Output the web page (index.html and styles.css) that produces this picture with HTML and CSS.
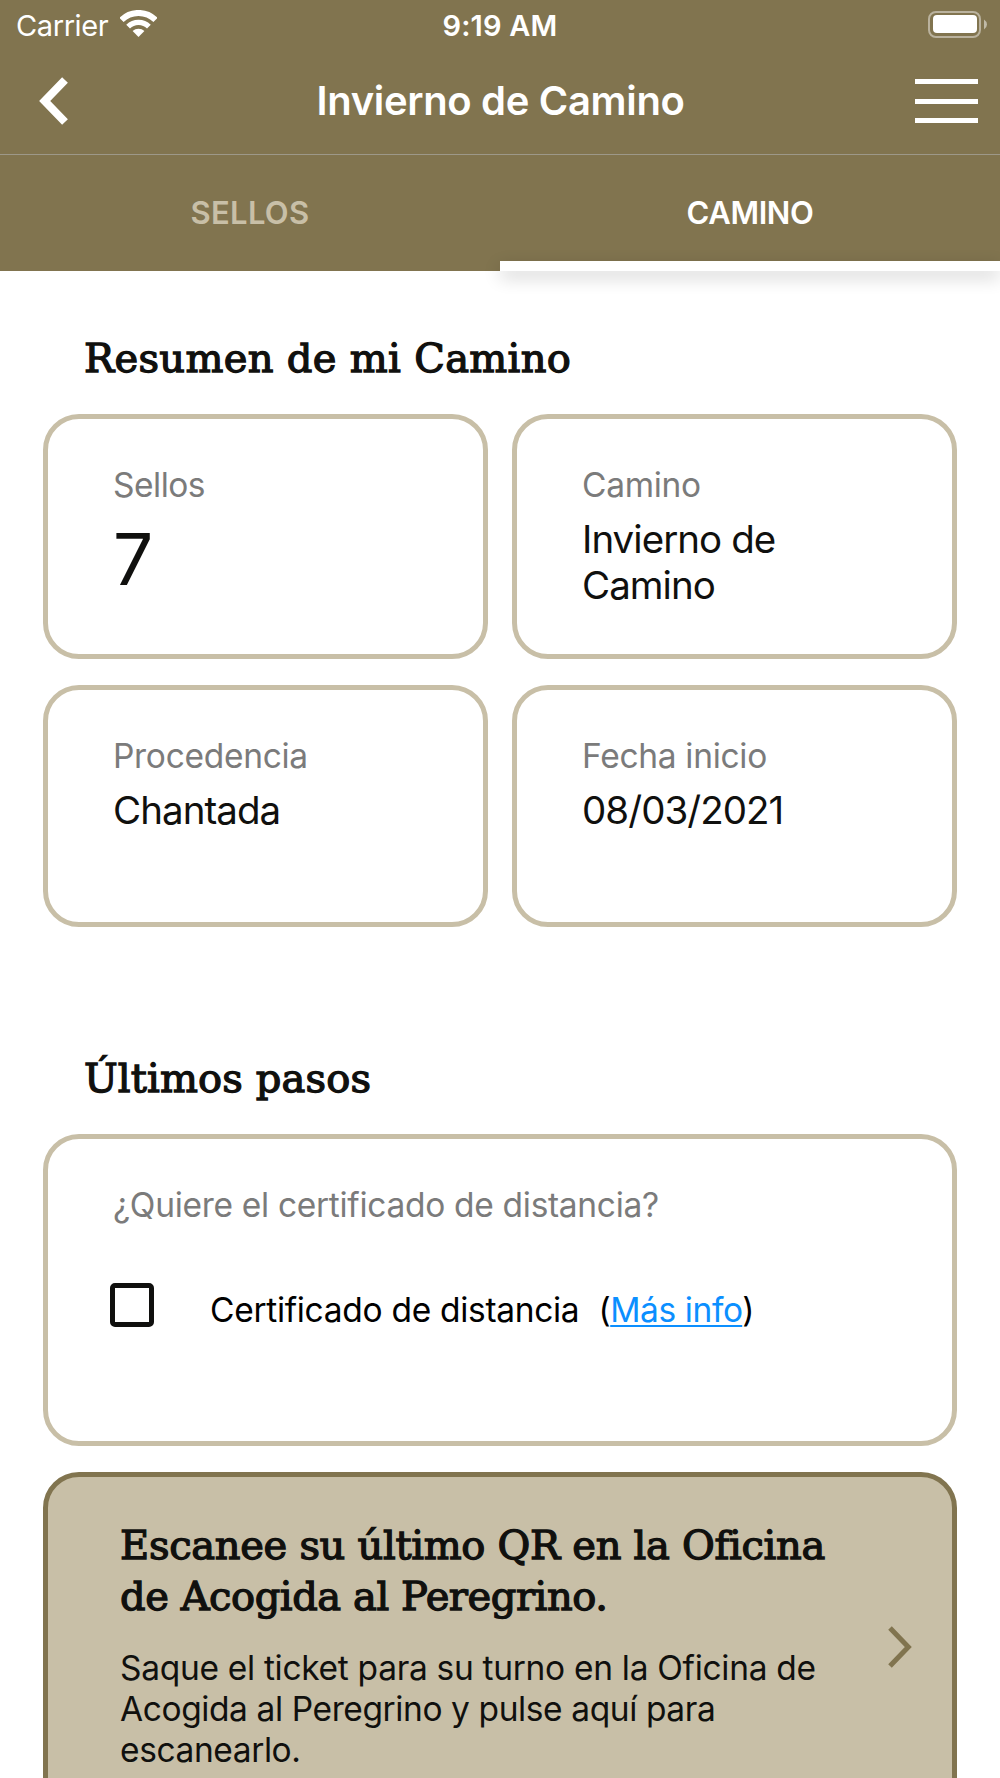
FILE: index.html
```
<!DOCTYPE html>
<html lang="es">
<head>
	<meta charset="UTF-8">
	<title>Invierno de Camino</title>
	<link rel="stylesheet" href="styles.css">
</head>
<body>

<header class="header">
	<div class="status">
		<div class="status-left">
			<span class="carrier">Carrier</span>
			<svg class="wifi" width="37" height="28" viewBox="0 0 37 28">
				<path d="M1.5 10A24 24 0 0 1 35.5 10" fill="none" stroke="#fff" stroke-width="6"/>
				<path d="M8.1 16.6A14.7 14.7 0 0 1 28.9 16.6" fill="none" stroke="#fff" stroke-width="5.3"/>
				<path d="M12.6 21.1A8.3 8.3 0 0 1 24.4 21.1L18.5 27Z" fill="#fff"/>
			</svg>
		</div>
		<span class="time">9:19 AM</span>
		<svg class="battery" width="60" height="27" viewBox="0 0 60 27">
			<rect x="1" y="1" width="51" height="25" rx="7" fill="none" stroke="#fff" stroke-opacity=".45" stroke-width="2"/>
			<rect x="5" y="4" width="44" height="18" rx="4" fill="#fff"/>
			<path d="M56 8.5Q59 10.500 59 13.500T56 18.500Z" fill="#fff" fill-opacity=".5"/>
		</svg>
	</div>

	<div class="navbar">
		<svg class="back" width="30" height="48" viewBox="0 0 30 48">
			<path d="M26 3L5.700 24L26 45" fill="none" stroke="#fff" stroke-width="8"/>
		</svg>
		<h1 class="title">Invierno de Camino</h1>
		<div class="menu"><i></i><i></i><i></i></div>
	</div>

	<nav class="tabs">
		<a class="tab">SELLOS</a>
		<a class="tab active">CAMINO</a>
	</nav>
</header>

<main class="content">
	<h2 class="heading">Resumen de mi Camino</h2>
	<div class="grid">
		<div class="card">
			<div class="label short">Sellos</div>
			<div class="value big">7</div>
		</div>
		<div class="card">
			<div class="label">Camino</div>
			<div class="value">Invierno de<br>Camino</div>
		</div>
		<div class="card">
			<div class="label">Procedencia</div>
			<div class="value">Chantada</div>
		</div>
		<div class="card">
			<div class="label">Fecha inicio</div>
			<div class="value">08/03/2021</div>
		</div>
	</div>

	<h2 class="heading last">Últimos pasos</h2>
	<div class="card certificate">
		<div class="label">¿Quiere el certificado de distancia?</div>
		<div class="check-row">
			<span class="checkbox"></span>
			<span class="check-text">Certificado de distancia<span class="more">(<a class="link">Más info</a>)</span></span>
		</div>
	</div>

	<div class="card scan">
		<div class="scan-body">
			<h3 class="scan-title">Escanee su último QR en la Oficina<br><span class="tighter">de Acogida al Peregrino.</span></h3>
			<p class="scan-text">Saque el ticket para su turno en la Oficina de<br><span class="tight">Acogida al Peregrino y pulse aquí para<br>escanearlo.</span></p>
		</div>
		<svg class="arrow" width="26" height="42" viewBox="0 0 26 42">
			<path d="M3 2L21.300 21L3 40" fill="none" stroke="#81744f" stroke-width="5"/>
		</svg>
	</div>
</main>

</body>
</html>
```
FILE: styles.css
```
* {
	box-sizing: border-box;
}

body {
	margin: 0;
	height: 1778px;
	overflow: hidden;
	background-color: #fff;
	color: #10100e;
	font-family: Inter, "Liberation Sans", sans-serif;
}

h1, h2, h3, p {
	margin: 0;
}

svg {
	display: block;
}

/* header */

.header {
	background-color: #81744f;
	color: #fff;
}

.status {
	display: grid;
	grid-template-columns: 1fr auto 1fr;
	height: 50px;
	padding: 0 12px 0 16px;
	font-size: 29px;
	line-height: 52px;
}

.status-left {
	display: flex;
	gap: 12px;
}

.carrier {
	letter-spacing: -0.4px;
}

.wifi {
	margin-top: 10px;
}

.time {
	font-weight: 600;
	letter-spacing: 0.2px;
	padding-right: 4px;
}

.battery {
	justify-self: end;
	margin-top: 11px;
}

.navbar {
	display: flex;
	align-items: center;
	justify-content: space-between;
	height: 105px;
	padding: 0 22px 2px 39px;
	border-bottom: 1px solid #9d9889;
}

.title {
	margin-left: 17px;
	font-size: 40px;
	font-weight: 600;
	line-height: 50px;
	letter-spacing: -0.33px;
}

.menu {
	display: flex;
	flex-direction: column;
	justify-content: space-between;
	width: 63px;
	height: 44px;
}

.menu i {
	height: 5px;
	background-color: #fff;
}

.tabs {
	display: flex;
	height: 116px;
}

.tab {
	flex: 1;
	position: relative;
	color: #c8bfa7;
	font-size: 31px;
	font-weight: 600;
	line-height: 116px;
	letter-spacing: 0.3px;
	text-align: center;
}

.tab.active {
	color: #fff;
	letter-spacing: -0.4px;
}

.tab.active::after {
	content: "";
	position: absolute;
	left: 0;
	right: 0;
	bottom: 0;
	height: 10px;
	background-color: #fff;
	box-shadow: 0 6px 18px rgba(0, 0, 0, 0.2);
}

/* content */

.content {
	padding: 60px 43px 0;
}

.heading, .scan-title {
	font-family: "DejaVu Serif", serif;
	font-size: 40px;
	font-weight: 400;
	-webkit-text-stroke: 1.3px #10100e;
}

.heading {
	margin: 0 0 29px 41px;
	line-height: 54px;
	letter-spacing: 0.33px;
}

.heading.last {
	margin-top: 124px;
	letter-spacing: 0.15px;
}

.grid {
	display: grid;
	grid-template-columns: 1fr 1fr;
	grid-template-rows: 245px 242px;
	gap: 26px 24px;
}

.card {
	padding: 46px 30px 0 65px;
	border: 5px solid #c8bfa7;
	border-radius: 36px;
}

.label {
	margin-bottom: 11px;
	color: #7b7b7b;
	font-size: 33.5px;
	line-height: 40px;
	letter-spacing: -0.3px;
}

.label.short {
	letter-spacing: -0.5px;
}

.value {
	font-size: 38.5px;
	line-height: 46px;
	letter-spacing: -0.95px;
}

.value.big {
	font-size: 71px;
	line-height: 86px;
}

.certificate {
	height: 312px;
}

.check-row {
	display: flex;
	gap: 56px;
	margin: 58px 0 0 -3px;
}

.checkbox {
	width: 44px;
	height: 44px;
	border: 5px solid #10100e;
	border-radius: 5px;
}

.check-text {
	padding-top: 7px;
	color: #000;
	font-size: 33.5px;
	line-height: 40px;
	letter-spacing: -0.3px;
}

.more {
	margin-left: 19px;
	letter-spacing: -0.4px;
}

.link {
	color: #0b8fff;
	text-decoration: underline;
	text-decoration-thickness: 2px;
	text-underline-offset: 3px;
}

.scan {
	display: flex;
	align-items: center;
	justify-content: space-between;
	height: 360px;
	margin-top: 26px;
	padding: 44px 39px 55px 72px;
	background-color: #c8bfa7;
	border-color: #81744f;
}

.scan-title {
	line-height: 50.5px;
	letter-spacing: -0.3px;
	white-space: nowrap;
	margin-top: -2px;
}

.tighter {
	letter-spacing: -0.45px;
}

.scan-text {
	margin-top: 27px;
	font-size: 33.5px;
	line-height: 41px;
	letter-spacing: -0.3px;
	white-space: nowrap;
}

.tight {
	letter-spacing: -0.4px;
}
```
